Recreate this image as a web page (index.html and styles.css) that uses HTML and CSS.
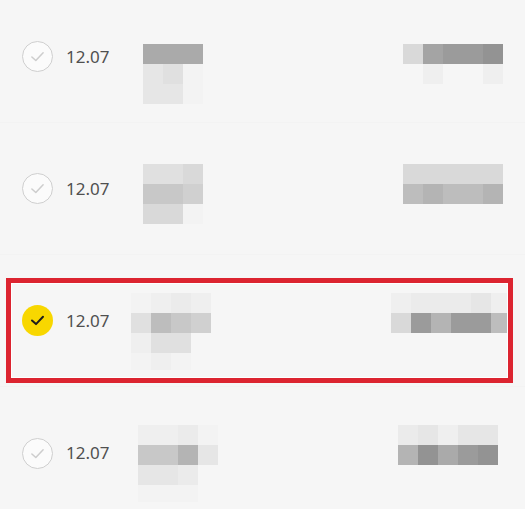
FILE: index.html
```html
<!DOCTYPE html>
<html lang="en">
<head>
<meta charset="utf-8">
<title>Deliveries</title>
<link rel="stylesheet" href="styles.css">
</head>
<body>
<div class="viewport">
  <ul class="list">
    <li class="row row-1">
      <span class="tick"><svg viewBox="0 0 31 31"><path d="M9.5 16l4.2 3.8 7.8-8.3"/></svg></span>
      <span class="date">12.07</span>
      <div class="mosaic left cols-3">
        <span class="k11"></span><span class="k11"></span><span class="k11"></span>
        <span class="k4"></span><span class="k5"></span><span class="k1"></span>
        <span class="k4"></span><span class="k4"></span><span class="k1"></span>
      </div>
      <div class="mosaic right cols-5">
        <span class="k6"></span><span class="k12"></span><span class="k13"></span><span class="k13"></span><span class="k14"></span>
        <span></span><span class="k2"></span><span></span><span></span><span class="k2"></span>
      </div>
    </li>
    <li class="row row-2">
      <span class="tick"><svg viewBox="0 0 31 31"><path d="M9.5 16l4.2 3.8 7.8-8.3"/></svg></span>
      <span class="date">12.07</span>
      <div class="mosaic left cols-3">
        <span class="k5"></span><span class="k5"></span><span class="k6"></span>
        <span class="k8"></span><span class="k8"></span><span class="k7"></span>
        <span class="k6"></span><span class="k6"></span><span class="k1"></span>
      </div>
      <div class="mosaic right cols-5">
        <span class="k6"></span><span class="k6"></span><span class="k6"></span><span class="k6"></span><span class="k6"></span>
        <span class="k9"></span><span class="k10"></span><span class="k9"></span><span class="k9"></span><span class="k10"></span>
      </div>
    </li>
    <li class="row row-3 is-picked">
      <span class="tick on"><svg viewBox="0 0 31 31"><path d="M10 15.5l4 3.6 7-7.4"/></svg></span>
      <span class="date">12.07</span>
      <div class="mosaic left cols-4 tail">
        <span class="k1"></span><span class="k2"></span><span class="k3"></span><span class="k2"></span>
        <span class="k5"></span><span class="k9"></span><span class="k8"></span><span class="k7"></span>
        <span class="k2"></span><span class="k5"></span><span class="k5"></span><span></span>
        <span class="k1"></span><span class="k2"></span><span class="k1"></span><span></span>
      </div>
      <div class="mosaic right cols-6">
        <span class="k2"></span><span class="k3"></span><span class="k3"></span><span class="k3"></span><span class="k4"></span><span class="k2"></span>
        <span class="k6"></span><span class="k13"></span><span class="k10"></span><span class="k13"></span><span class="k13"></span><span class="k9"></span>
      </div>
      <div class="frame"></div>
    </li>
    <li class="row row-4">
      <span class="tick"><svg viewBox="0 0 31 31"><path d="M9.5 16l4.2 3.8 7.8-8.3"/></svg></span>
      <span class="date">12.07</span>
      <div class="mosaic left cols-4 tail">
        <span class="k2"></span><span class="k2"></span><span class="k3"></span><span class="k1"></span>
        <span class="k8"></span><span class="k8"></span><span class="k10"></span><span class="k4"></span>
        <span class="k4"></span><span class="k4"></span><span class="k3"></span><span></span>
        <span class="k1"></span><span class="k1"></span><span class="k1"></span><span></span>
      </div>
      <div class="mosaic right cols-5">
        <span class="k3"></span><span class="k4"></span><span class="k2"></span><span class="k4"></span><span class="k4"></span>
        <span class="k10"></span><span class="k14"></span><span class="k11"></span><span class="k13"></span><span class="k14"></span>
      </div>
    </li>
  </ul>
</div>
</body>
</html>
```
FILE: styles.css
```css
html, body {
  margin: 0;
  padding: 0;
  background: #f6f6f6;
  overflow: hidden;
}

.viewport {
  width: 525px;
  height: 509px;
  overflow: hidden;
}

.list {
  list-style: none;
  margin: -9px 0 0;
  padding: 0;
  font-family: "Noto Sans", "Open Sans", sans-serif;
}

.row {
  position: relative;
  height: 132px;
  box-sizing: border-box;
  display: flex;
  align-items: center;
  padding: 0 0 0 22px;
  border-bottom: 1px solid #f3f3f3;
}

.row:last-child { border-bottom: 0; }

/* round check marker */
.tick {
  flex: none;
  width: 31px;
  height: 31px;
  box-sizing: border-box;
  border-radius: 50%;
  border: 1px solid #cfcfcf;
  background: #fbfbfb;
  display: flex;
}

.tick svg {
  width: 100%;
  height: 100%;
}

.tick path {
  fill: none;
  stroke: #cdcdcd;
  stroke-width: 1.6;
  stroke-linecap: round;
  stroke-linejoin: round;
}

.tick.on {
  border: 0;
  background: #f8d700;
}

.tick.on path {
  stroke: #1c1c1c;
  stroke-width: 2;
}

.date {
  flex: none;
  width: 44px;
  margin-left: 13px;
  font-size: 17px;
  line-height: 24px;
  color: #505050;
}

/* blurred blocks */
.mosaic {
  align-self: flex-start;
  display: grid;
  grid-auto-rows: 20px;
}

.mosaic.tail { grid-template-rows: 20px 20px 20px 17px; }

.cols-3 { grid-template-columns: repeat(3, 20px); }
.cols-4 { grid-template-columns: repeat(4, 20px); }
.cols-5 { grid-template-columns: repeat(5, 20px); }
.cols-6 { grid-template-columns: repeat(5, 20px) 16px; }

.mosaic.right { margin-left: auto; }

.row-1 .mosaic { margin-top: 53px; }
.row-1 .left { margin-left: 33px; }
.row-1 .right { margin-right: 22px; }

.row-2 .mosaic { margin-top: 41px; }
.row-2 .left { margin-left: 33px; }
.row-2 .right { margin-right: 22px; }

.row-3 .mosaic { margin-top: 38px; }
.row-3 .left { margin-left: 21px; }
.row-3 .right { margin-right: 18px; }

.row-4 .mosaic { margin-top: 38px; }
.row-4 .left { margin-left: 28px; }
.row-4 .right { margin-right: 27px; }

.k1 { background: #f3f3f3; }
.k2 { background: #efefef; }
.k3 { background: #ebebeb; }
.k4 { background: #e6e6e6; }
.k5 { background: #e0e0e0; }
.k6 { background: #d9d9d9; }
.k7 { background: #d0d0d0; }
.k8 { background: #c8c8c8; }
.k9 { background: #bdbdbd; }
.k10 { background: #b4b4b4; }
.k11 { background: #aaaaaa; }
.k12 { background: #a4a4a4; }
.k13 { background: #9b9b9b; }
.k14 { background: #939393; }

/* highlight frame drawn over the picked row */
.frame {
  position: absolute;
  left: 6px;
  right: 12px;
  top: 23px;
  bottom: 3px;
  border: 5px solid #dc2430;
  box-shadow: inset 0 0 0 1px #ffffff;
  pointer-events: none;
}
```
